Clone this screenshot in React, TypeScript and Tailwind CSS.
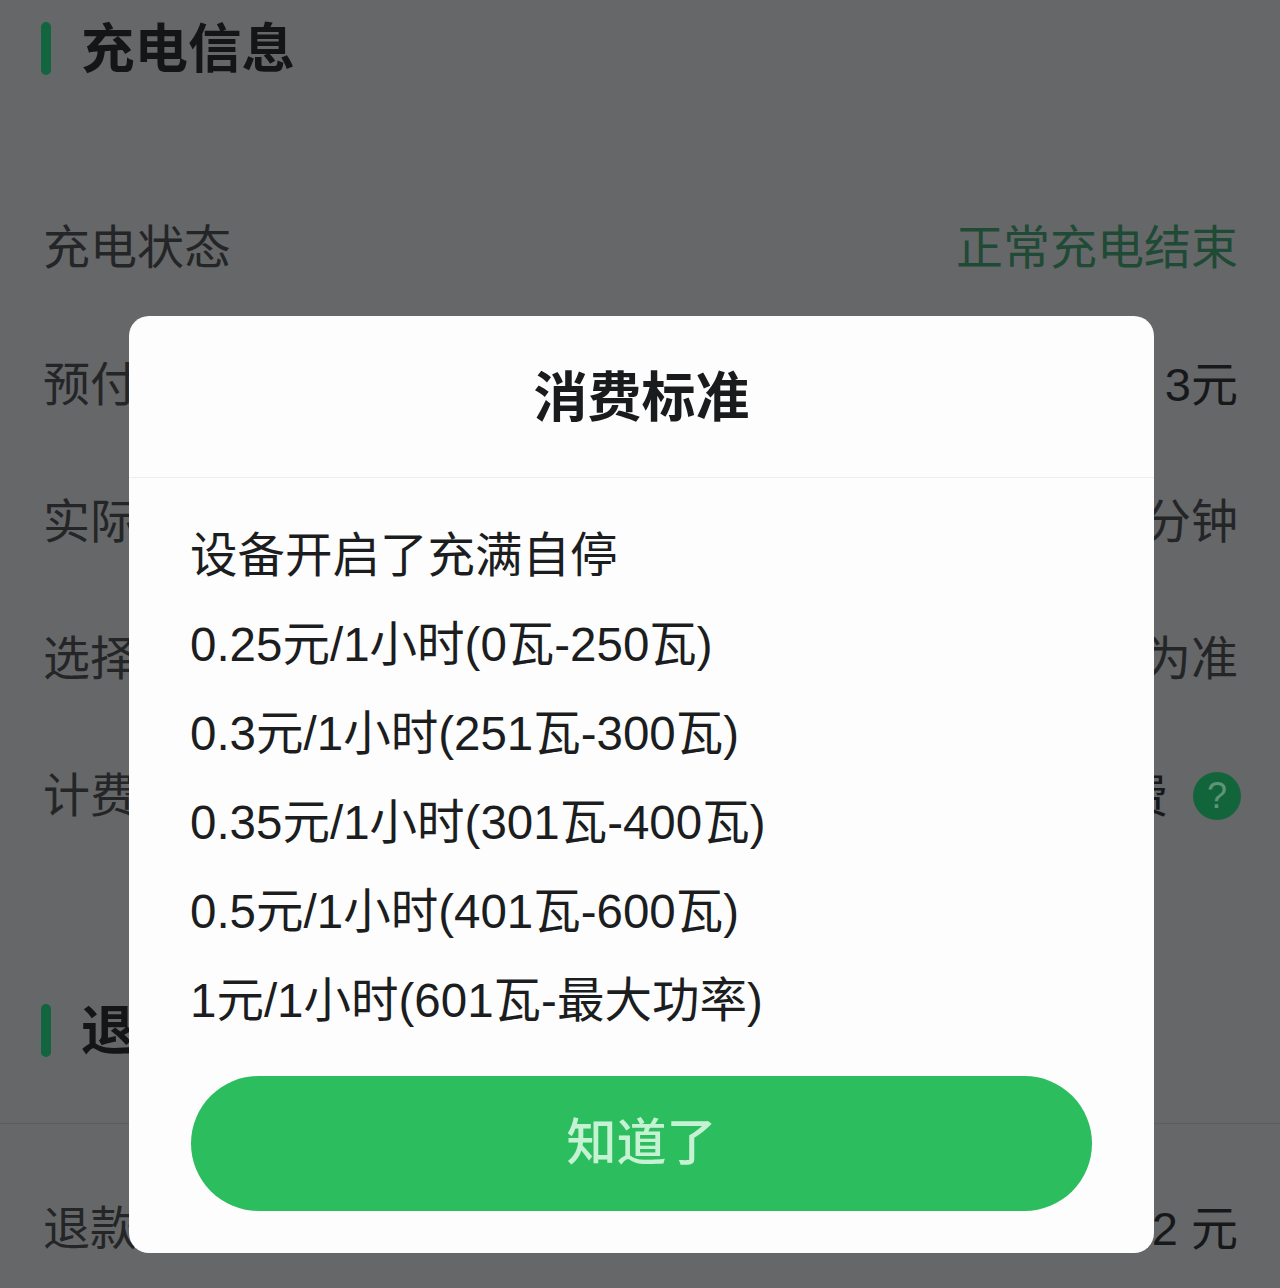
import React from "react";

const FONT = "font-['Liberation_Sans','Noto_Sans_CJK_SC',sans-serif]";

const infoRows = [
  { label: "预付金额", value: "3元", tone: "text-[#17181a]" },
  { label: "实际时长", value: "120分钟", tone: "text-[#242527]" },
  { label: "选择时长", value: "以实际为准", tone: "text-[#242527]" },
];

const priceRows = [
  "设备开启了充满自停",
  "0.25元/1小时(0瓦-250瓦)",
  "0.3元/1小时(251瓦-300瓦)",
  "0.35元/1小时(301瓦-400瓦)",
  "0.5元/1小时(401瓦-600瓦)",
  "1元/1小时(601瓦-最大功率)",
];

/* ── Section title with the green bar ── */
const SectionTitle: React.FC<{ title: string; className: string }> = ({ title, className }) => (
  <div className={`flex items-center gap-[30px] pl-[41px] ${className}`}>
    <div className="h-[53px] w-[10px] rounded-full bg-[#12653f]" />
    <h2 className="pt-[3px] text-[53.5px] leading-[60px] font-bold text-[#141517]">{title}</h2>
  </div>
);

const Row: React.FC<{ label: string; children: React.ReactNode; className?: string }> = ({
  label,
  children,
  className = "",
}) => (
  <div className={`flex h-[137px] items-center justify-between pl-[43px] pr-[42px] text-[47px] ${className}`}>
    <span className="text-[#242527]">{label}</span>
    {children}
  </div>
);

export default function App() {
  return (
    <div className={`relative h-[1288px] w-[1280px] overflow-hidden bg-[#666769] ${FONT}`}>
      {/* Page behind the overlay */}
      <SectionTitle title="充电信息" className="pt-[17px]" />
      <div className="mt-[100px]">
        <Row label="充电状态">
          <span className="text-[#1f4a35]">正常充电结束</span>
        </Row>
        {infoRows.map((row) => (
          <Row key={row.label} label={row.label}>
            <span className={row.tone}>{row.value}</span>
          </Row>
        ))}
        <Row label="计费方式">
          <span className="-mr-[3px] flex items-center gap-[25px] text-[#17181a]">
            查看收费
            <span className="-mt-[2px] flex h-[48px] w-[48px] items-center justify-center rounded-full bg-[#12653a] text-[36px] leading-none text-[#5f9478]">
              ?
            </span>
          </span>
        </Row>
      </div>
      <SectionTitle title="退款信息" className="mt-[134px]" />
      <div className="mt-[61px] h-px bg-[#5c5d5f]" />
      <Row label="退款金额" className="mt-[37px]">
        <span className="text-[#17181a]">2 元</span>
      </Row>

      {/* Dialog */}
      <div className="absolute left-[129px] top-[316px] flex h-[937px] w-[1025px] flex-col rounded-[20px] bg-[#fdfdfe]">
        <div className="flex h-[162px] items-center justify-center border-b border-[#eeeef0] pt-1 text-[54px] font-bold text-[#1a1b1d]">
          消费标准
        </div>
        <div className="flex flex-col pl-[61px] pt-[33px]">
          {priceRows.map((row) => (
            <p key={row} className="h-[89px] text-[47.5px] leading-[89px] text-[#1c1d1f]">
              {row}
            </p>
          ))}
        </div>
        <button className="ml-[62px] mt-[31px] h-[135px] w-[901px] rounded-full bg-[#2bbd5e] text-[50px] font-medium text-[#c6f2d4]">
          知道了
        </button>
      </div>
    </div>
  );
}
